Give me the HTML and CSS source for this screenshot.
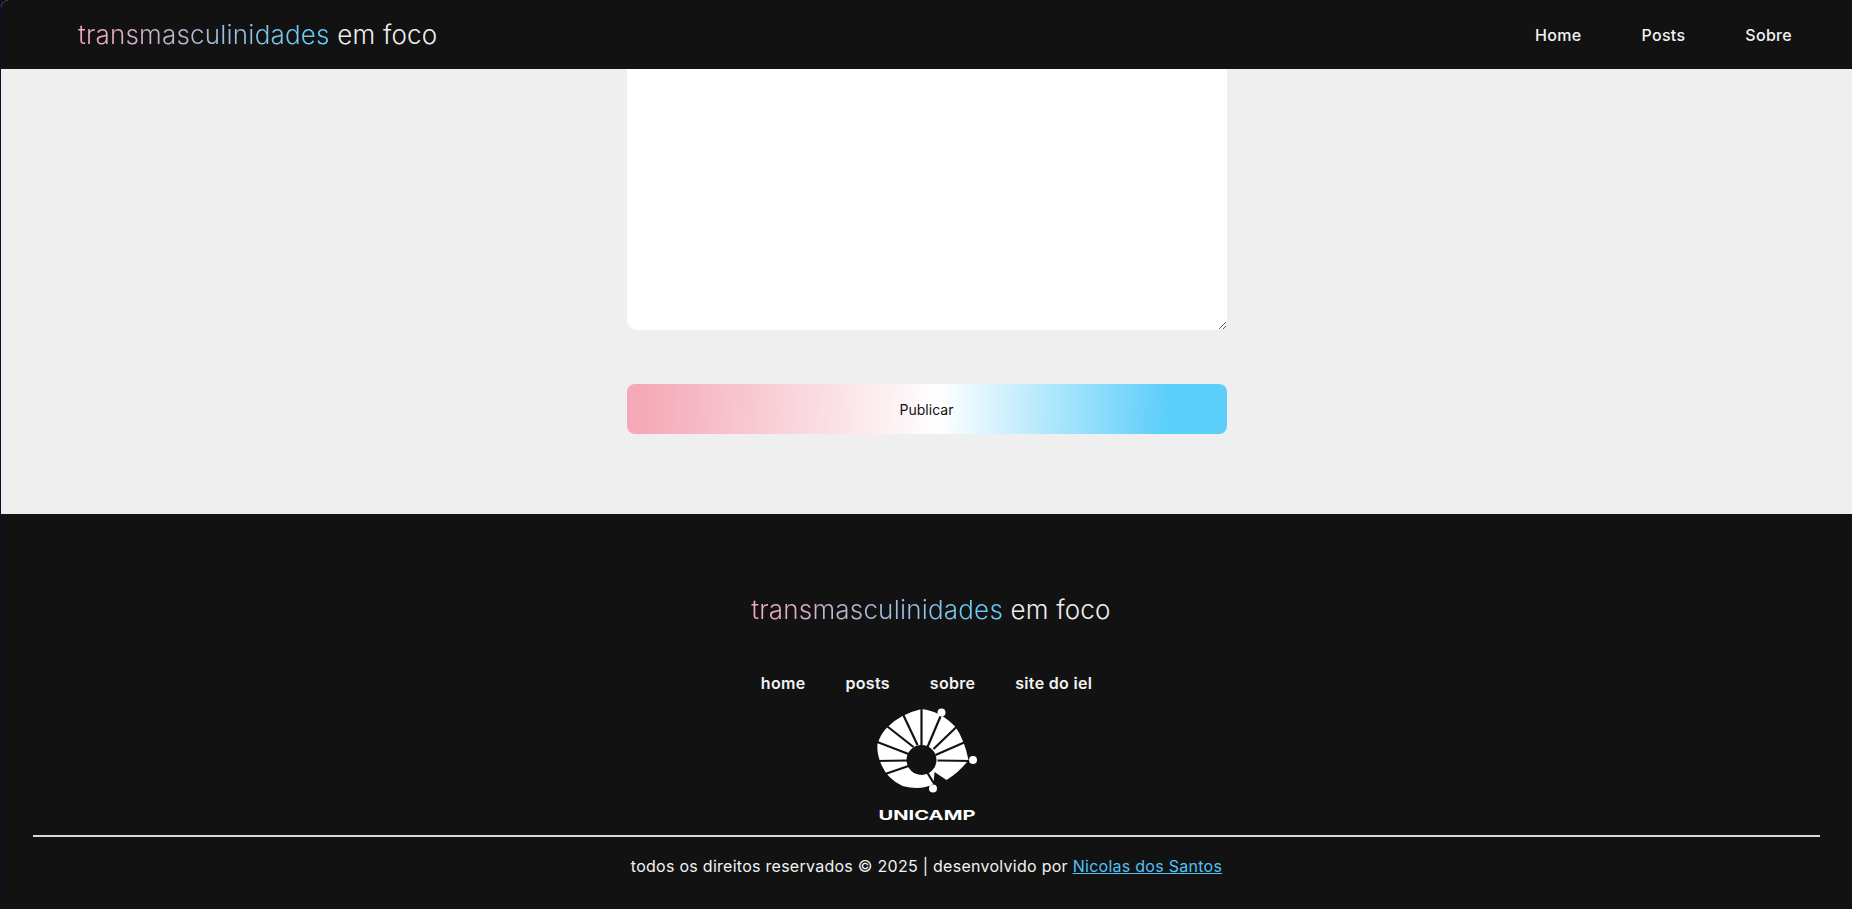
FILE: index.html
```html
<!DOCTYPE html>
<html lang="pt-BR">
  <head>
    <meta charset="UTF-8" />
    <meta name="viewport" content="width=device-width, initial-scale=1.0" />
    <title>transmasculinidades em foco</title>
    <link rel="stylesheet" href="styles.css">
  </head>
  <body>
    <div class="page">
      <!-- Header fixo -->
      <header class="topbar">
        <a class="brand" href="#"><span class="brand-grad">transmasculinidades</span> em foco</a>
        <nav class="topnav">
          <a href="#">Home</a>
          <a href="#">Posts</a>
          <a href="#">Sobre</a>
        </nav>
      </header>

      <!-- Formulario -->
      <main class="content">
        <form class="post-form">
          <textarea class="post-body" aria-label="Texto"></textarea>
          <button class="publish" type="button">Publicar</button>
        </form>
      </main>

      <!-- Footer -->
      <footer class="site-footer">
        <a class="brand footer-brand" href="#"><span class="brand-grad">transmasculinidades</span> em foco</a>
        <nav class="footer-nav">
          <a href="#">home</a>
          <a href="#">posts</a>
          <a href="#">sobre</a>
          <a href="#">site do iel</a>
        </nav>
        <svg class="unicamp" viewBox="34.5 12 104 121" width="104" height="121" aria-label="Unicamp">
          <path class="shell" d="M81 17 Q100 19 115 35 Q124 48 128 68 Q119 80 106 88 L94 80 L93 92 Q80 99 62 94 Q47 87 41 73 Q36 62 37 52 Q40 42 47 35 Q60 22 81 17 Z" />
          <g class="rays">
            <line x1="81" y1="55" x2="81" y2="12" />
            <line x1="87" y1="55" x2="101" y2="22" />
            <line x1="93" y1="57" x2="118" y2="33" />
            <line x1="95" y1="63" x2="127" y2="49" />
            <line x1="97" y1="68.5" x2="133" y2="69" />
            <line x1="87" y1="81" x2="97" y2="97" />
            <line x1="68" y1="74" x2="36" y2="85" />
            <line x1="67" y1="68.5" x2="34" y2="69" />
            <line x1="68" y1="62" x2="34" y2="49" />
            <line x1="73" y1="55" x2="45" y2="33" />
            <line x1="77" y1="53" x2="60" y2="17" />
          </g>
          <circle class="hole" cx="81" cy="68" r="15" />
          <circle class="dot" cx="101" cy="20.5" r="4" />
          <circle class="dot" cx="132.5" cy="68" r="4" />
          <circle class="dot" cx="92.5" cy="96.5" r="4" />
          <text class="unicamp-name" x="38" y="128" textLength="97" lengthAdjust="spacingAndGlyphs">UNICAMP</text>
        </svg>
        <hr class="footer-line" />
        <p class="copy">todos os direitos reservados © 2025 | desenvolvido por <a href="#">Nicolas dos Santos</a></p>
      </footer>
    </div>
  </body>
</html>
```

FILE: styles.css
```css
/* ========== RESET ========== */
* {
  margin: 0;
  padding: 0;
  box-sizing: border-box;
}
html,
body {
  height: 100%;
}
body {
  font-family: Inter, "Noto Sans", sans-serif;
  background: #0a0f2c;
  padding-left: 1px;
  overflow: hidden;
}
a {
  color: inherit;
  text-decoration: none;
}
.page {
  height: 100%;
  display: flex;
  flex-direction: column;
  background: #efefef;
  border-top-left-radius: 8px;
  overflow: hidden;
}

/* ========== HEADER ========== */
.topbar {
  height: 69px;
  flex-shrink: 0;
  display: flex;
  align-items: center;
  justify-content: space-between;
  padding: 0 60px 0 77px;
  background: #121212;
  color: #f2f2f2;
}
.brand {
  font-size: 26px;
  font-weight: 300;
  letter-spacing: 0.2px;
  color: #efefef;
  white-space: nowrap;
}
.brand-grad {
  background: linear-gradient(90deg, #f5a9b8, #5bcefa);
  -webkit-background-clip: text;
  background-clip: text;
  color: transparent;
}
.topnav {
  display: flex;
  gap: 60px;
}
.topnav a {
  font-size: 16px;
  font-weight: 500;
  letter-spacing: 0.3px;
  color: #f2f2f2;
}

/* ========== FORM ========== */
.content {
  flex: 1;
  display: flex;
  justify-content: center;
}
.post-form {
  width: 600px;
  display: flex;
  flex-direction: column;
  gap: 54px;
}
.post-body {
  display: block;
  width: 100%;
  height: 261px;
  border: 0;
  outline: 0;
  background: #fff;
  border-radius: 0 0 10px 10px;
  resize: vertical;
}
.publish {
  height: 50px;
  border: 0;
  border-radius: 8px;
  font-family: inherit;
  font-size: 14px;
  color: #111;
  background: linear-gradient(92deg, #f5a9b8 3%, #fff 52%, #5bcefa 90%);
}

/* ========== FOOTER ========== */
.site-footer {
  height: 395px;
  flex-shrink: 0;
  display: flex;
  flex-direction: column;
  align-items: center;
  padding: 78px 32px 0;
  background: #121212;
  color: #f2f2f2;
}
.footer-brand {
  line-height: 36px;
  margin-left: 9px;
}
.footer-nav {
  display: flex;
  gap: 40px;
  margin-top: 43px;
  font-size: 16px;
  line-height: 24px;
  font-weight: 600;
  letter-spacing: 0.3px;
}
.unicamp {
  display: block;
  margin-top: 9px;
  flex-shrink: 0;
}
.shell,
.dot {
  fill: #fff;
}
.hole {
  fill: #121212;
}
.rays line {
  stroke: #121212;
  stroke-width: 2.2;
}
.unicamp-name {
  fill: #fff;
  font-size: 13.5px;
  font-weight: 700;
}
.footer-line {
  width: 100%;
  height: 2px;
  border: 0;
  background: #d8d8d8;
  margin-top: 10px;
  flex-shrink: 0;
}
.copy {
  margin-top: 17px;
  font-size: 16px;
  line-height: 24px;
  letter-spacing: 0.27px;
  color: #f2f2f2;
}
.copy a {
  color: #4fc3f7;
  text-decoration: underline;
}
```
